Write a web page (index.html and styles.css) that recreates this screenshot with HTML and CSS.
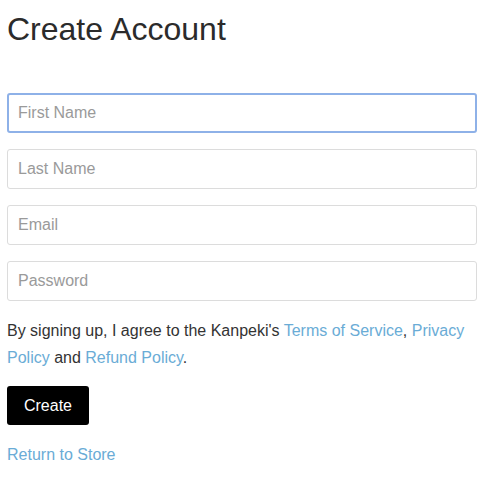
FILE: index.html
```html
<!DOCTYPE html>
<html lang="en">
<head>
<meta charset="utf-8">
<title>Create Account</title>
<link rel="stylesheet" href="styles.css">
</head>
<body>
<main class="page">
  <h1 class="title">Create Account</h1>
  <form class="form">
    <input class="field field--focus" type="text" placeholder="First Name">
    <input class="field" type="text" placeholder="Last Name">
    <input class="field" type="email" placeholder="Email">
    <input class="field" type="password" placeholder="Password">
    <p class="terms">By signing up, I agree to the Kanpeki's <a href="#" class="link">Terms of Service</a>, <a href="#" class="link">Privacy</a> <a href="#" class="link">Policy</a> and <a href="#" class="link">Refund Policy</a>.</p>
    <button class="btn" type="button">Create</button>
    <a href="#" class="link back">Return to Store</a>
  </form>
</main>
</body>
</html>
```
FILE: styles.css
```css
html, body {
  margin: 0;
  padding: 0;
  background: #fff;
}
body {
  font-family: "Liberation Sans", Arial, sans-serif;
  color: #333;
  font-size: 16px;
}
.page {
  width: 470px;
  padding: 0 7px;
}
.title {
  margin: 0;
  padding-top: 11px;
  font-size: 32px;
  font-weight: normal;
  line-height: 36px;
  color: #2b2b2b;
}
.form {
  display: flex;
  flex-direction: column;
  align-items: flex-start;
  margin-top: 46px;
}
.field {
  box-sizing: border-box;
  width: 470px;
  height: 40px;
  margin: 0 0 16px 0;
  padding: 0 10px;
  border: 1px solid #dcdcdc;
  border-radius: 3px;
  font-family: "Liberation Sans", Arial, sans-serif;
  font-size: 16px;
  color: #333;
  background: #fff;
  outline: none;
}
.field::placeholder {
  color: #9a9a9a;
}
.field--focus {
  border: 2px solid #8eb1e8;
  padding-left: 9px;
}
.terms {
  margin: 0 0 15px 0;
  line-height: 27px;
  color: #333;
}
.link {
  color: #6aacd6;
  text-decoration: none;
}
.btn {
  box-sizing: border-box;
  width: 82px;
  height: 39px;
  padding: 0;
  border: none;
  border-radius: 3px;
  background: #000;
  color: #fff;
  font-family: "Liberation Sans", Arial, sans-serif;
  font-size: 16px;
  cursor: pointer;
}
.back {
  margin-top: 16px;
  line-height: 27px;
}
```
